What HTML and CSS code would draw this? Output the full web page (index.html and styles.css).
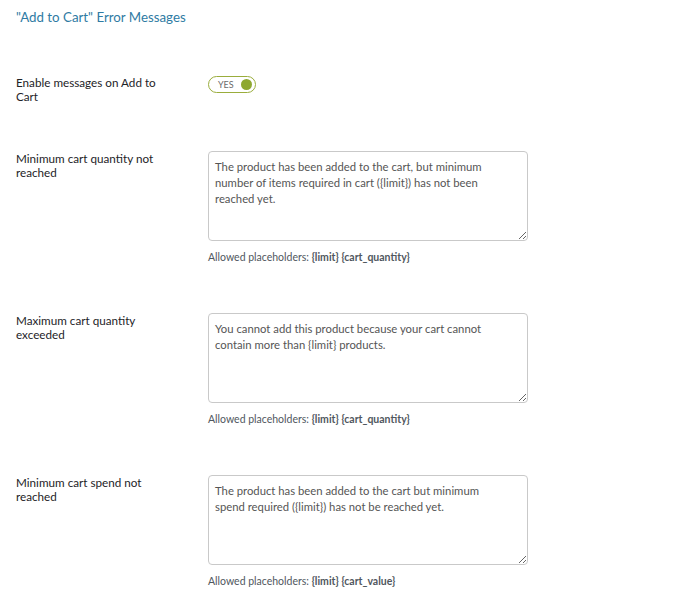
FILE: index.html
```html
<!DOCTYPE html>
<html>
<head>
    <title>Add to Cart Error Messages</title>
    <link rel="stylesheet" href="styles.css">
</head>
<body>
    <h2 class="section-title">"Add to Cart" Error Messages</h2>

    <div class="form-table">
        <div class="row row-toggle">
            <label class="row-label">Enable messages on Add to Cart</label>
            <div class="row-field">
                <span class="toggle">
                    <span class="toggle-text">YES</span>
                    <span class="toggle-knob"></span>
                </span>
            </div>
        </div>

        <div class="row">
            <label class="row-label">Minimum cart quantity not reached</label>
            <div class="row-field">
                <textarea class="message">The product has been added to the cart, but minimum number of items required in cart ({limit}) has not been reached yet.</textarea>
                <p class="help">Allowed placeholders: <span class="ph">{limit}</span> <span class="ph">{cart_quantity}</span></p>
            </div>
        </div>

        <div class="row">
            <label class="row-label">Maximum cart quantity exceeded</label>
            <div class="row-field">
                <textarea class="message">You cannot add this product because your cart cannot contain more than {limit} products.</textarea>
                <p class="help">Allowed placeholders: <span class="ph">{limit}</span> <span class="ph">{cart_quantity}</span></p>
            </div>
        </div>

        <div class="row">
            <label class="row-label">Minimum cart spend not reached</label>
            <div class="row-field">
                <textarea class="message">The product has been added to the cart but minimum spend required ({limit}) has not be reached yet.</textarea>
                <p class="help">Allowed placeholders: <span class="ph">{limit}</span> <span class="ph">{cart_value}</span></p>
            </div>
        </div>
    </div>
</body>
</html>
```

FILE: styles.css
```css
body {
    font-family: Lato, "Open Sans", sans-serif;
    font-size: 11.7px;
    color: #1d2327;
    background: #fff;
    margin: 0;
    padding: 0 16px;
}
.section-title {
    font-size: 13.3px;
    font-weight: 400;
    color: #2f7ba3;
    margin: 8px 0 0;
    line-height: 18px;
}
.form-table {
    margin-top: 49px;
}
.row {
    display: flex;
    align-items: flex-start;
    padding-bottom: 50px;
}
.row-toggle {
    padding-bottom: 48px;
}
.row-label {
    flex: 0 0 148px;
    margin-right: 44px;
    line-height: 14px;
}
.row-field {
    display: flex;
    flex-direction: column;
    align-items: flex-start;
}
.row-toggle .row-field {
    padding-top: 1px;
}
.toggle {
    display: inline-flex;
    align-items: center;
    justify-content: space-between;
    box-sizing: border-box;
    width: 48px;
    height: 17px;
    border: 1.5px solid #9aad3c;
    border-radius: 9px;
    padding: 0 3px 0 9px;
}
.toggle-text {
    font-size: 9px;
    color: #6b6b6b;
    line-height: 1;
}
.toggle-knob {
    width: 11px;
    height: 11px;
    border-radius: 50%;
    background: #8ea831;
}
.message {
    display: block;
    box-sizing: border-box;
    width: 320px;
    height: 90px;
    border: 1px solid #c9c9c9;
    border-radius: 4px;
    padding: 7px 30px 7px 6px;
    font-family: Lato, "Open Sans", sans-serif;
    font-size: 11.3px;
    line-height: 16px;
    color: #555;
    resize: vertical;
    margin: 0;
}
.help {
    font-size: 10.5px;
    color: #50575e;
    margin: 10px 0 0;
    height: 12px;
    line-height: 12px;
}
.ph {
    font-weight: 700;
}
```
